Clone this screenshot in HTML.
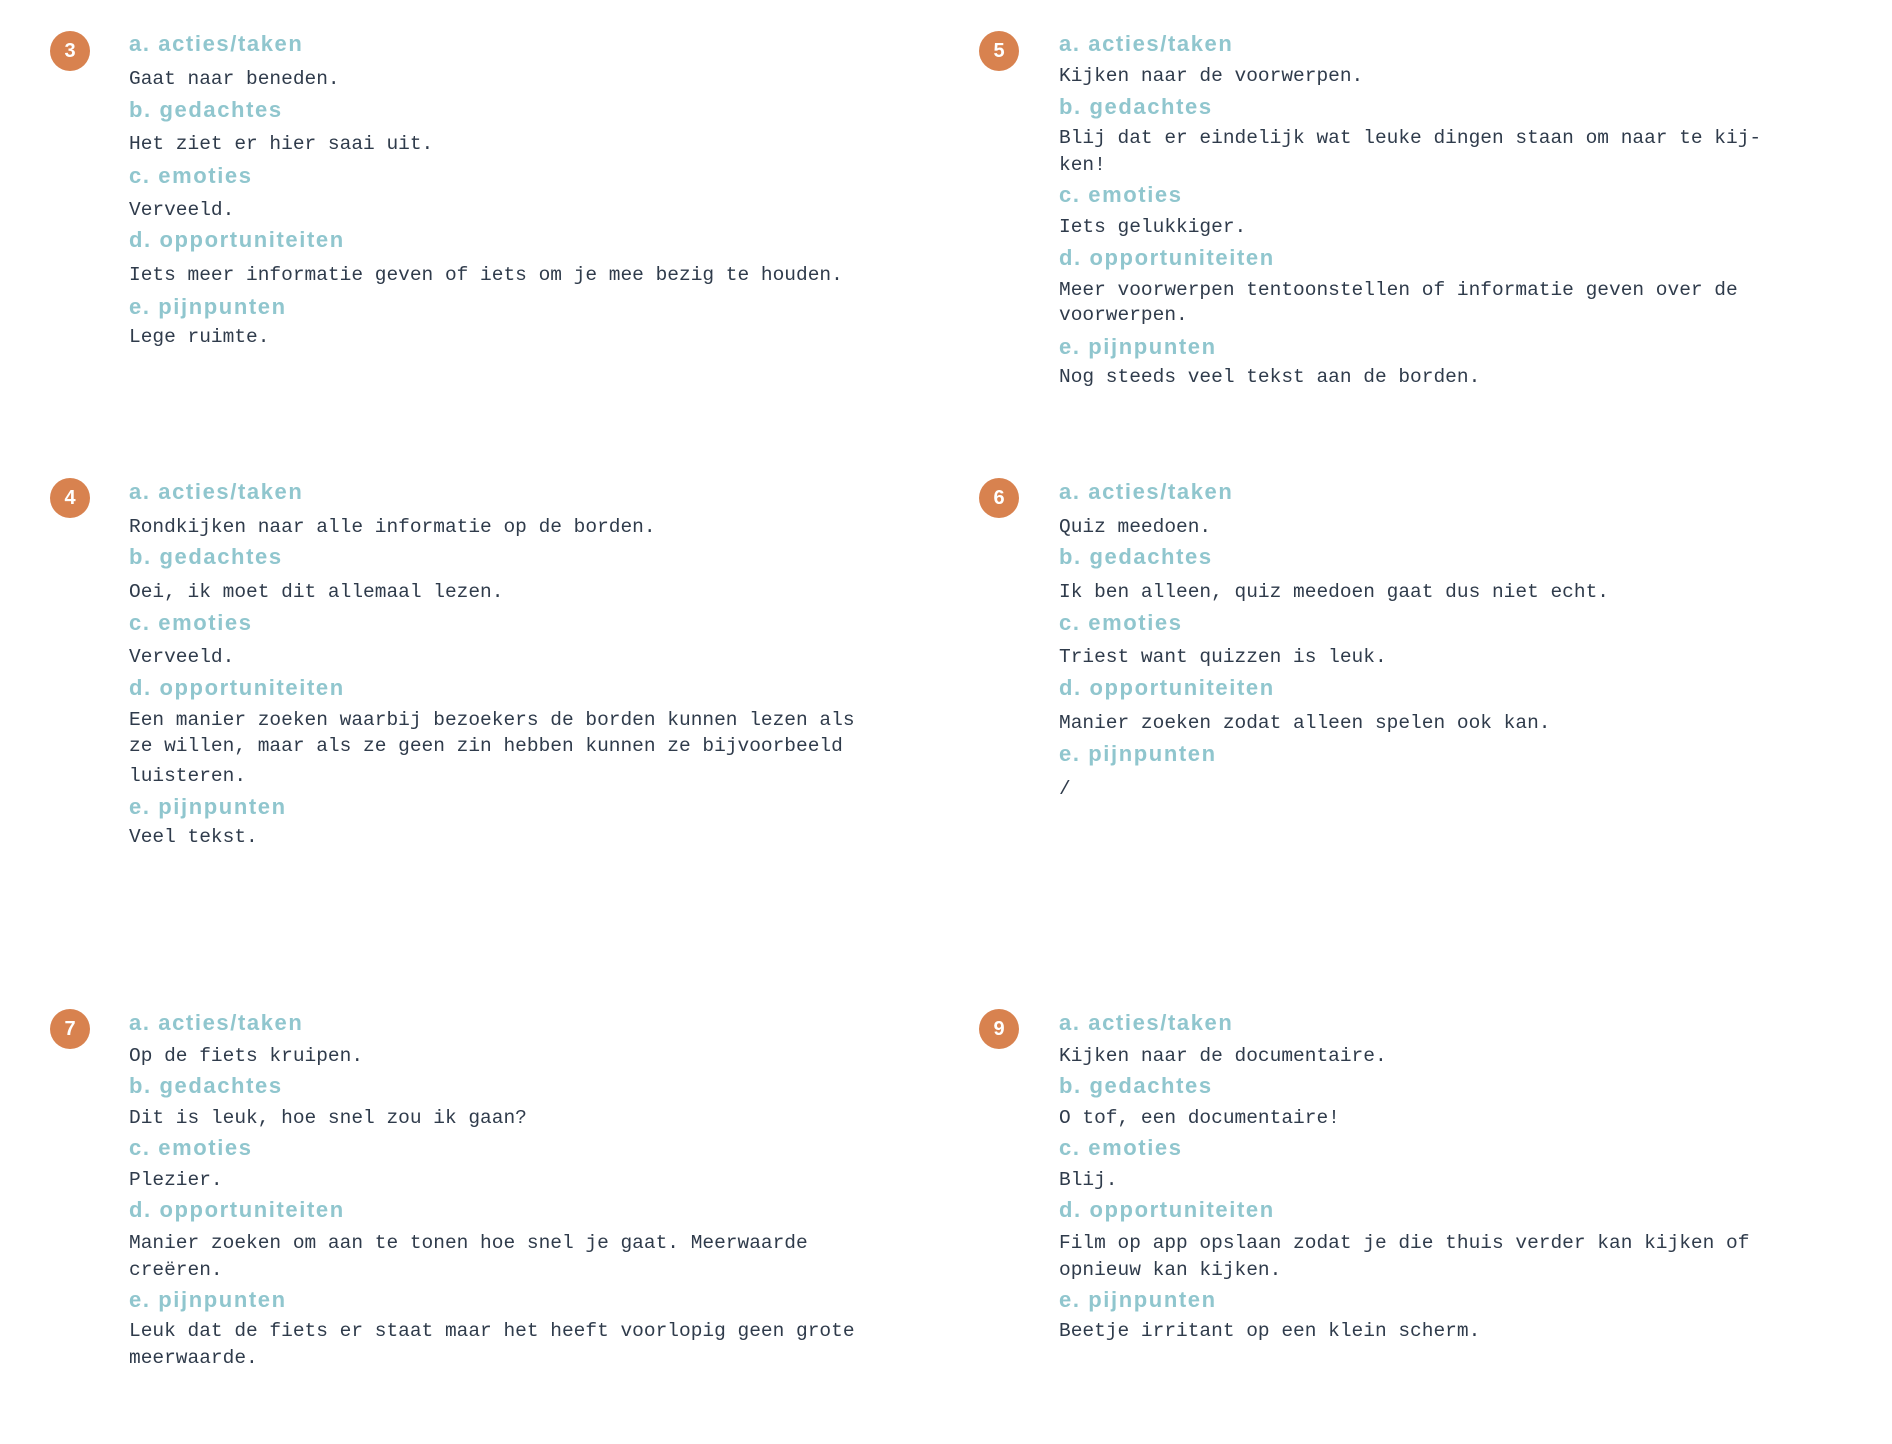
<!DOCTYPE html>
<html><head><meta charset="utf-8"><style>
body{margin:0;width:1892px;height:1444px;background:#fff;position:relative;overflow:hidden}
.s{position:absolute;left:0;width:1892px;height:0}
.c{position:absolute;width:40px;height:40px;border-radius:50%;background:#d8824f;color:#fff;font:bold 20px "Liberation Sans",sans-serif;text-align:center;line-height:40px;transform:translate(-50%,-50%)}
.h,.t{position:absolute;white-space:nowrap;transform:translateY(-50%);line-height:26px}
.h{font:bold 22px "Liberation Sans",sans-serif;color:#90c6ce;letter-spacing:1.6px}
.t{font:19.5px "Liberation Mono",monospace;color:#2f3b4b}
.L{left:129px}.R{left:1059px}
</style></head><body>
<div class="s" style="top:0">
<div class="c" style="left:70px;top:51px">3</div>
<div class="h L" style="top:44px">a. acties/taken</div>
<div class="t L" style="top:79px">Gaat naar beneden.</div>
<div class="h L" style="top:110px">b. gedachtes</div>
<div class="t L" style="top:144px">Het ziet er hier saai uit.</div>
<div class="h L" style="top:176px">c. emoties</div>
<div class="t L" style="top:210px">Verveeld.</div>
<div class="h L" style="top:240px">d. opportuniteiten</div>
<div class="t L" style="top:275px">Iets meer informatie geven of iets om je mee bezig te houden.</div>
<div class="h L" style="top:307px">e. pijnpunten</div>
<div class="t L" style="top:337px">Lege ruimte.</div>

<div class="c" style="left:999px;top:51px">5</div>
<div class="h R" style="top:44px">a. acties/taken</div>
<div class="t R" style="top:76px">Kijken naar de voorwerpen.</div>
<div class="h R" style="top:107px">b. gedachtes</div>
<div class="t R" style="top:138px">Blij dat er eindelijk wat leuke dingen staan om naar te kij-</div>
<div class="t R" style="top:165px">ken!</div>
<div class="h R" style="top:195px">c. emoties</div>
<div class="t R" style="top:227px">Iets gelukkiger.</div>
<div class="h R" style="top:258px">d. opportuniteiten</div>
<div class="t R" style="top:290px">Meer voorwerpen tentoonstellen of informatie geven over de</div>
<div class="t R" style="top:315px">voorwerpen.</div>
<div class="h R" style="top:347px">e. pijnpunten</div>
<div class="t R" style="top:377px">Nog steeds veel tekst aan de borden.</div>
</div>

<div class="s" style="top:-2px">
<div class="c" style="left:70px;top:500px">4</div>
<div class="h L" style="top:494px">a. acties/taken</div>
<div class="t L" style="top:529px">Rondkijken naar alle informatie op de borden.</div>
<div class="h L" style="top:559px">b. gedachtes</div>
<div class="t L" style="top:594px">Oei, ik moet dit allemaal lezen.</div>
<div class="h L" style="top:625px">c. emoties</div>
<div class="t L" style="top:659px">Verveeld.</div>
<div class="h L" style="top:690px">d. opportuniteiten</div>
<div class="t L" style="top:722px">Een manier zoeken waarbij bezoekers de borden kunnen lezen als</div>
<div class="t L" style="top:748px">ze willen, maar als ze geen zin hebben kunnen ze bijvoorbeeld</div>
<div class="t L" style="top:778px">luisteren.</div>
<div class="h L" style="top:809px">e. pijnpunten</div>
<div class="t L" style="top:839px">Veel tekst.</div>

<div class="c" style="left:999px;top:500px">6</div>
<div class="h R" style="top:494px">a. acties/taken</div>
<div class="t R" style="top:529px">Quiz meedoen.</div>
<div class="h R" style="top:559px">b. gedachtes</div>
<div class="t R" style="top:594px">Ik ben alleen, quiz meedoen gaat dus niet echt.</div>
<div class="h R" style="top:625px">c. emoties</div>
<div class="t R" style="top:659px">Triest want quizzen is leuk.</div>
<div class="h R" style="top:690px">d. opportuniteiten</div>
<div class="t R" style="top:725px">Manier zoeken zodat alleen spelen ook kan.</div>
<div class="h R" style="top:756px">e. pijnpunten</div>
<div class="t R" style="top:791px">/</div>
</div>

<div class="s" style="top:-4px">
<div class="c" style="left:70px;top:1033px">7</div>
<div class="h L" style="top:1027px">a. acties/taken</div>
<div class="t L" style="top:1060px">Op de fiets kruipen.</div>
<div class="h L" style="top:1090px">b. gedachtes</div>
<div class="t L" style="top:1122px">Dit is leuk, hoe snel zou ik gaan?</div>
<div class="h L" style="top:1152px">c. emoties</div>
<div class="t L" style="top:1184px">Plezier.</div>
<div class="h L" style="top:1214px">d. opportuniteiten</div>
<div class="t L" style="top:1247px">Manier zoeken om aan te tonen hoe snel je gaat. Meerwaarde</div>
<div class="t L" style="top:1274px">creëren.</div>
<div class="h L" style="top:1304px">e. pijnpunten</div>
<div class="t L" style="top:1335px">Leuk dat de fiets er staat maar het heeft voorlopig geen grote</div>
<div class="t L" style="top:1362px">meerwaarde.</div>

<div class="c" style="left:999px;top:1033px">9</div>
<div class="h R" style="top:1027px">a. acties/taken</div>
<div class="t R" style="top:1060px">Kijken naar de documentaire.</div>
<div class="h R" style="top:1090px">b. gedachtes</div>
<div class="t R" style="top:1122px">O tof, een documentaire!</div>
<div class="h R" style="top:1152px">c. emoties</div>
<div class="t R" style="top:1184px">Blij.</div>
<div class="h R" style="top:1214px">d. opportuniteiten</div>
<div class="t R" style="top:1247px">Film op app opslaan zodat je die thuis verder kan kijken of</div>
<div class="t R" style="top:1274px">opnieuw kan kijken.</div>
<div class="h R" style="top:1304px">e. pijnpunten</div>
<div class="t R" style="top:1335px">Beetje irritant op een klein scherm.</div>
</div>
</body></html>
